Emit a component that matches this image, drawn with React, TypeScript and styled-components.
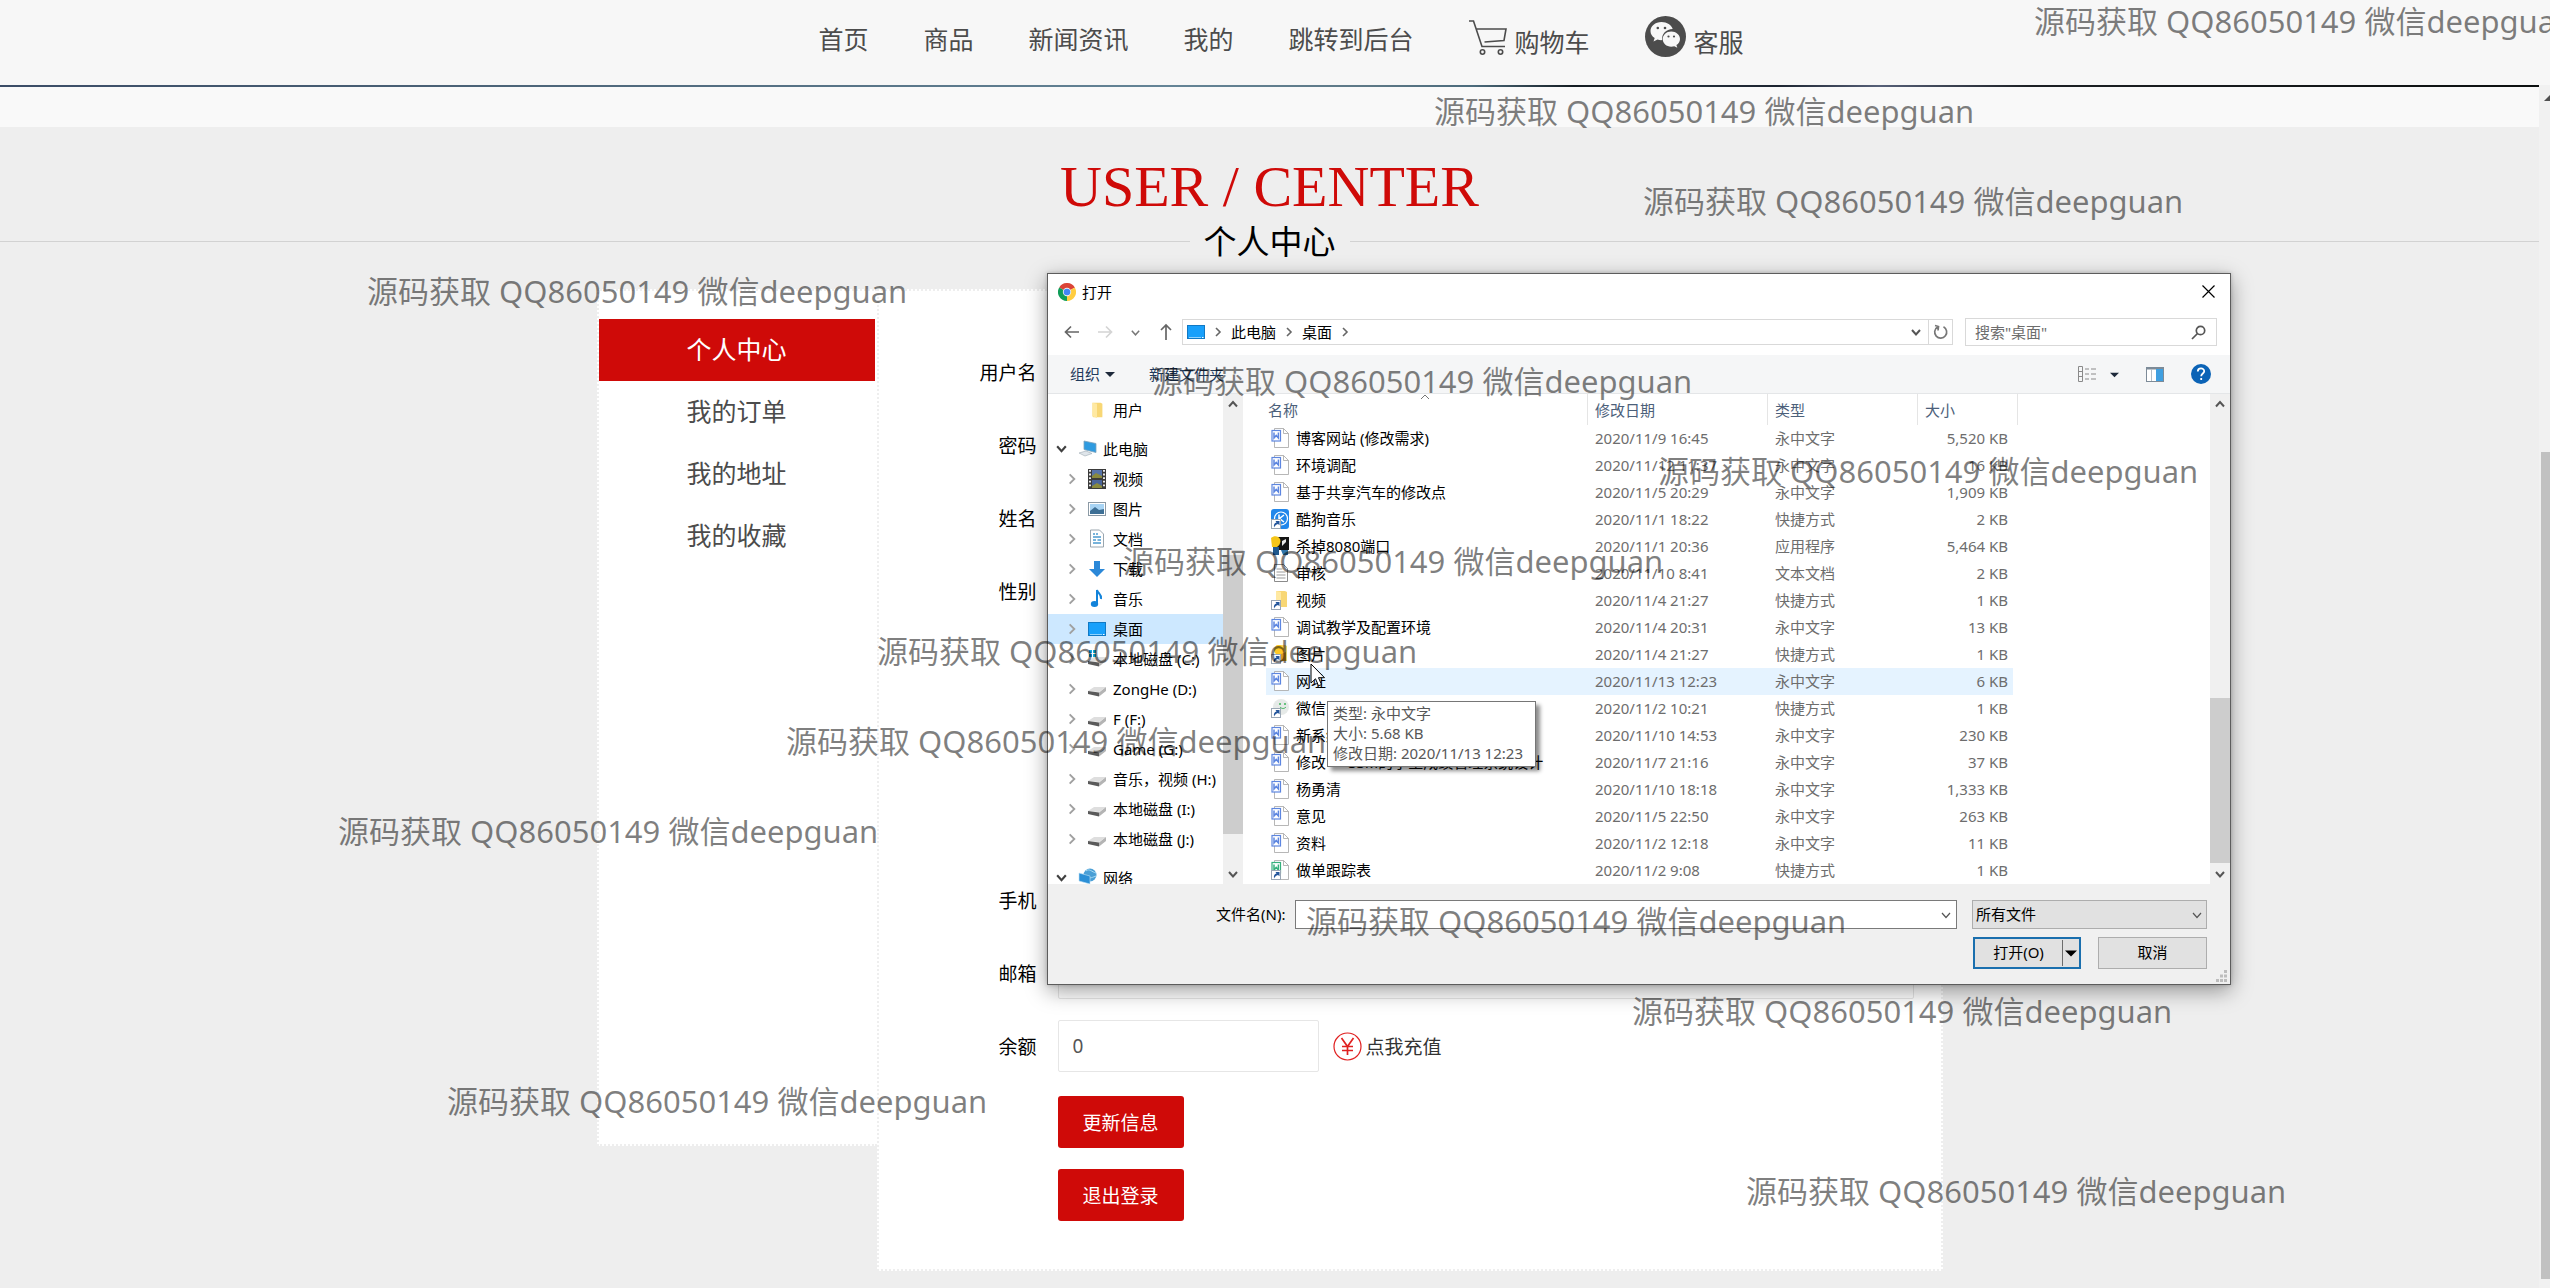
import React from 'react';
import styled, { createGlobalStyle } from 'styled-components';

const sans = `"Noto Sans", "Noto Sans CJK SC", sans-serif`;
const red = '#cf0a08';

const GlobalStyle = createGlobalStyle`
  *, *::before, *::after { box-sizing: border-box; }
  body { margin: 0; background: #eee; font-family: ${sans}; font-weight: 400; color: #000; }
  button, input, select { font: inherit; color: inherit; margin: 0; }
  button { cursor: pointer; }
  a { color: inherit; text-decoration: none; }
  ul { list-style: none; margin: 0; padding: 0; }
  h1, h2 { margin: 0; font-weight: inherit; }
  svg { display: block; flex: none; }
`;

/* ---------- page ---------- */

const Page = styled.div`
  position: relative;
  display: flex;
  flex-direction: column;
  min-height: 100vh;
  overflow: hidden;
`;

const Header = styled.header`
  display: flex;
  justify-content: center;
  height: 85px;
  padding: 14px 0 0 12px;
  background: #f7f7f7;
`;

const Nav = styled.nav`
  display: flex;
  align-items: flex-start;
  gap: 55px;
  font-size: 25px;
  line-height: 50px;
  color: #4c4c4c;
`;

const NavLink = styled.a`
  display: flex;
  gap: 8px;
  white-space: nowrap;
`;

const NavIconLink = styled(NavLink)`
  line-height: 56px;
`;

const Viewport = styled.div`
  flex: 1;
  display: flex;
`;

const Content = styled.main`
  flex: 1;
  min-width: 0;
`;

const BannerEdge = styled.div`
  height: 2px;
  background: linear-gradient(90deg, #3b4c66 0%, #4c6478 20%, #648496 46%, #5d7886 54%, #4b6b7c 58%, #141c22 62%, #24303c 66%, #1c2430 70%, #566078 74%, #1c2024 80%, #0c1010 100%);
`;

const Strip = styled.div`
  height: 40px;
  background: #f9f9f9;
`;

const Heading = styled.div`
  padding-top: 30px;
  text-align: center;
`;

const HeadingEn = styled.h1`
  font-family: "Liberation Serif", serif;
  font-weight: 400;
  font-size: 58px;
  line-height: 60px;
  color: ${red};
`;

const HeadingZh = styled.h2`
  display: flex;
  align-items: center;
  gap: 14px;
  font-size: 33px;
  line-height: 50px;
  &::before, &::after {
    content: "";
    flex: 1;
    height: 2px;
    border-top: 1px solid #d2d2d2;
  }
`;

const Panels = styled.div`
  display: flex;
  align-items: flex-start;
  width: 1346px;
  max-width: 100%;
  margin: 22px auto 16px;
`;

const Side = styled.aside`
  width: 280px;
  min-height: 857px;
  padding: 28px 2px 0 0;
  background: #fff;
  border: 2px dotted #eee;
  border-right: 0;
`;

const SideLink = styled.a<{ $active?: boolean }>`
  display: block;
  padding-bottom: 2px;
  font-size: 25px;
  line-height: 60px;
  text-align: center;
  color: ${p => (p.$active ? '#fff' : '#4c4c4c')};
  background: ${p => (p.$active ? red : 'transparent')};
`;

const Form = styled.form`
  flex: 1;
  display: flex;
  flex-direction: column;
  gap: 21px;
  padding: 55px 27px 48px 0;
  background: #fff;
  border: 2px dotted #eee;
  font-size: 19px;
`;

const Row = styled.div`
  display: grid;
  grid-template-columns: 158px 1fr;
  column-gap: 21px;
  align-items: center;
`;

const RowLabel = styled.label`
  text-align: right;
`;

const Field = styled.input`
  width: 100%;
  height: 52px;
  padding: 0 14px;
  border: 1px solid #e6e6e6;
  border-radius: 2px;
  background: #fff;
  color: #555;
  outline: 0;
`;

const Balance = styled.div`
  display: grid;
  grid-template-columns: 261px auto 1fr;
  column-gap: 14px;
  align-items: center;
`;

const TopUp = styled.a`
  display: flex;
  align-items: center;
  gap: 4px;
  color: #333;
`;

const AvatarBox = styled.div`
  height: 215px;
  width: 261px;
  border: 1px solid #e6e6e6;
`;

const Actions = styled.div`
  display: flex;
  flex-direction: column;
  align-items: flex-start;
  gap: 21px;
  padding: 3px 0 0 179px;
`;

const RedButton = styled.button`
  width: 126px;
  height: 52px;
  padding: 0;
  border: 0;
  border-radius: 3px;
  background: ${red};
  color: #fff;
`;

const PageScroll = styled.div`
  width: 11px;
  padding: 9px 0;
  display: flex;
  flex-direction: column;
  background: #f1f1f1;
  overflow: hidden;
`;

const PageSpacer = styled.div`
  flex: 350;
`;

const PageThumb = styled.div`
  flex: 826;
  margin-left: 2px;
  background: #c1c1c1;
`;

const ScrollArrow = styled.svg`
  margin-left: 5px;
`;

/* ---------- file dialog ---------- */

const Dialog = styled.section`
  position: absolute;
  left: 1047px;
  top: 273px;
  width: 1184px;
  display: flex;
  flex-direction: column;
  border: 1px solid #5c5c5c;
  background: #fff;
  box-shadow: 0 6px 20px rgba(0, 0, 0, 0.38), 0 0 4px rgba(0, 0, 0, 0.2);
  font-size: 15px;
  line-height: 20px;
`;

const TitleBar = styled.header`
  display: flex;
  align-items: center;
  gap: 6px;
  height: 37px;
  padding: 0 15px 2px 10px;
`;

const IconButton = styled.button`
  display: flex;
  align-items: center;
  justify-content: center;
  padding: 0;
  border: 0;
  background: none;
`;

const CloseButton = styled(IconButton)`
  margin-left: auto;
`;

const AddressRow = styled.div`
  display: flex;
  align-items: center;
  height: 44px;
  padding: 0 13px 2px 16px;
`;

const Arrows = styled.div`
  display: flex;
  align-items: center;
  justify-content: space-between;
  width: 110px;
  margin-right: 8px;
`;

const Crumbs = styled.div`
  flex: 1;
  display: flex;
  align-items: center;
  gap: 7px;
  height: 26px;
  padding-left: 4px;
  border: 1px solid #d9d9d9;
`;

const CrumbTools = styled.div`
  display: flex;
  align-self: stretch;
  margin-left: auto;
`;

const CrumbTool = styled(IconButton)<{ $divided?: boolean }>`
  width: 24px;
  border-left: ${p => (p.$divided ? '1px solid #d9d9d9' : '0')};
`;

const SearchBox = styled.label`
  display: flex;
  align-items: center;
  width: 252px;
  height: 28px;
  margin-left: 12px;
  padding: 0 10px 0 9px;
  border: 1px solid #d9d9d9;
`;

const SearchInput = styled.input`
  flex: 1;
  min-width: 0;
  padding: 0;
  border: 0;
  outline: 0;
  background: none;
  &::placeholder { color: #6d6d6d; opacity: 1; }
`;

const Toolbar = styled.div`
  display: flex;
  align-items: center;
  height: 39px;
  padding: 0 19px 0 22px;
  background: #f5f6f7;
  border-bottom: 1px solid #e4e6e8;
  color: #1e395b;
`;

const ToolText = styled.button`
  display: flex;
  align-items: center;
  gap: 5px;
  margin-right: 34px;
  padding: 0;
  border: 0;
  background: none;
`;

const ToolIcons = styled.div`
  display: flex;
  align-items: center;
  gap: 27px;
  margin-left: auto;
`;

const ViewPicker = styled(IconButton)`
  gap: 14px;
`;

const Body = styled.div`
  display: flex;
  height: 490px;
`;

const Tree = styled.ul`
  width: 175px;
  padding-top: 1px;
  overflow: hidden;
`;

const TreeItem = styled.li<{ $level: number; $gap?: boolean; $active?: boolean }>`
  display: grid;
  grid-template-columns: 12px 20px 1fr;
  column-gap: ${p => (p.$level ? '11px' : '11px')};
  align-items: center;
  height: 30px;
  margin-top: ${p => (p.$gap ? '9px' : '0')};
  padding-left: ${p => (p.$level ? '17px' : '7px')};
  padding-bottom: 1px;
  white-space: nowrap;
  background: ${p => (p.$active ? '#cde8ff' : 'transparent')};
`;

const TreeText = styled.span`
  margin-left: -6px;
`;

const Scroll = styled.div`
  display: grid;
  width: 20px;
  background: #f0f0f0;
  justify-items: center;
`;

const TreeScroll = styled(Scroll)`
  grid-template-rows: 20px 141fr 279fr 30fr 20px;
  align-items: center;
  margin-right: 2px;
`;

const FileScroll = styled(Scroll)`
  grid-template-rows: 20px 284fr 165fr 1fr 20px;
  align-items: center;
  margin-left: auto;
`;

const Thumb = styled.div`
  grid-row: 3;
  align-self: stretch;
  justify-self: stretch;
  background: #cdcdcd;
`;

const ScrollEnd = styled(IconButton)`
  grid-row: 5;
`;

const Files = styled.table`
  width: 752px;
  margin-left: 21px;
  align-self: flex-start;
  table-layout: fixed;
  border-collapse: separate;
  border-spacing: 0;
  color: #6d6d6d;
`;

const HeadCell = styled.th`
  height: 31px;
  padding: 0 0 0 7px;
  border-right: 1px solid #e5e5e5;
  font-weight: inherit;
  text-align: left;
  color: #4c607a;
  &:first-child { padding-left: 2px; }
`;

const FileRow = styled.tr<{ $hover?: boolean }>`
  td { background-color: ${p => (p.$hover ? '#e5f3ff' : 'transparent')}; }
`;

const Cell = styled.td`
  height: 27px;
  padding: 0 0 2px 7px;
  white-space: nowrap;
  background-clip: padding-box;
  &:last-child {
    padding: 0 5px 2px 0;
    border-right: 5px solid transparent;
    text-align: right;
  }
`;

const NameCell = styled(Cell)`
  padding-left: 5px;
  color: #000;
`;

const FileName = styled.span`
  display: flex;
  align-items: center;
  gap: 7px;
`;

const Footer = styled.footer`
  position: relative;
  display: flex;
  flex-direction: column;
  gap: 8px;
  padding: 16px 23px 15px 168px;
  background: #f0f0f0;
`;

const FooterLine = styled.div`
  display: flex;
  align-items: center;
  gap: 15px;
`;

const FileLabel = styled.label`
  margin-right: -5px;
  padding-bottom: 2px;
`;

const Combo = styled.div`
  flex: 1;
  display: flex;
  align-items: center;
  height: 29px;
  padding: 0 4px;
  border: 1px solid #7a7a7a;
  background: #fff;
`;

const ComboInput = styled.input`
  flex: 1;
  min-width: 0;
  border: 0;
  outline: 0;
  background: none;
`;

const TypePicker = styled.div`
  display: grid;
  align-items: center;
  width: 235px;
  > * { grid-area: 1 / 1; }
  > svg { justify-self: end; margin-right: 4px; pointer-events: none; }
`;

const TypeSelect = styled.select`
  appearance: none;
  width: 100%;
  height: 29px;
  padding: 0 3px 2px;
  border: 1px solid #adadad;
  border-radius: 0;
  background: #e1e1e1;
`;

const Buttons = styled(FooterLine)`
  justify-content: flex-end;
  gap: 17px;
`;

const OpenSplit = styled.div`
  display: flex;
  width: 108px;
  height: 32px;
  padding: 1px 0;
  border: 2px solid #1a6fae;
  background: #e1e1e1;
`;

const OpenButton = styled.button`
  flex: 1;
  padding: 0 0 2px;
  border: 0;
  background: none;
`;

const OpenMore = styled(IconButton)`
  width: 17px;
  border-left: 1px solid #6d6d6d;
`;

const CancelButton = styled.button`
  width: 109px;
  height: 32px;
  padding: 0 0 2px;
  border: 1px solid #adadad;
  background: #e1e1e1;
`;

const Grip = styled.svg`
  position: absolute;
  right: 3px;
  bottom: 2px;
`;

const SortMark = styled.svg`
  position: absolute;
  left: 1420px;
  top: 394px;
`;

const Tooltip = styled.div`
  position: absolute;
  left: 1327px;
  top: 701px;
  width: 209px;
  padding: 1px 5px 3px;
  border: 1px solid #767676;
  background: #fff;
  box-shadow: 4px 4px 4px rgba(0, 0, 0, 0.45);
  font-size: 15px;
  line-height: 20px;
  color: #575757;
  white-space: nowrap;
`;

const Pointer = styled.svg`
  position: absolute;
  left: 1310px;
  top: 663px;
`;

const Marks = styled.div`
  position: absolute;
  inset: 0;
  overflow: hidden;
  pointer-events: none;
`;

const Mark = styled.span<{ $x: number; $y: number }>`
  position: absolute;
  left: ${p => p.$x}px;
  top: ${p => p.$y}px;
  font-size: 31px;
  line-height: 40px;
  white-space: nowrap;
  color: rgba(0, 0, 0, 0.5);
`;

/* ---------- drawings ---------- */

const Cart = () => (
  <svg width="38" height="56" viewBox="0 0 38 56" fill="none" stroke="#4c4c4c" strokeWidth="1.6">
    <path d="M0 7h4.500l8.500 25.500h23M6.500 15h30.500l-2 11.500-19.500 1.500" />
    <circle cx="13.500" cy="38" r="2.200" /><circle cx="31.500" cy="38" r="2.200" />
  </svg>
);

const Wechat = () => (
  <svg width="41" height="56" viewBox="0 0 41 56">
    <circle cx="20.500" cy="22.500" r="20.500" fill="#4c4c4c" />
    <path fill="#f7f7f7" d="M16.500 8c-6.300 0-11 4-11 9 0 3 1.600 5.400 4.200 7.100L8.500 27.500l4-2c1.600.5 3 .7 4.700.6-.8-6 4-11 10.500-11C26.500 11 22 8 16.500 8z" />
    <path fill="#f7f7f7" d="M35 25c0-4.300-4-7.600-8.700-7.600-5 0-8.600 3.500-8.600 7.600 0 4.300 3.700 7.700 8.600 7.700 1 0 2-.2 3-.5l3 1.600-.9-2.700C33.600 29.600 35 27.600 35 25z" />
    <g fill="#4c4c4c"><circle cx="12.800" cy="14" r="1.300" /><circle cx="20" cy="14" r="1.300" /><circle cx="23.500" cy="22.500" r="1.100" /><circle cx="29" cy="22.500" r="1.100" /></g>
  </svg>
);

const Yuan = () => (
  <svg width="29" height="29" viewBox="0 0 29 29" fill="none" stroke="#e02020">
    <circle cx="14.500" cy="14.500" r="13.500" strokeWidth="1.200" />
    <path d="M8.500 6l6 8.500 6-8.500M14.500 14.500V23M9 14.500h11M9 18.500h11" strokeWidth="1.700" />
  </svg>
);

const Chrome = () => (
  <svg width="18" height="18" viewBox="0 0 18 18">
    <path fill="#db4437" d="M9 9L1.200 4.500A9 9 0 0 1 16.800 4.500z" />
    <path fill="#0f9d58" d="M9 9L9 18A9 9 0 0 1 1.200 4.500z" />
    <path fill="#ffcd40" d="M9 9L16.800 4.500A9 9 0 0 1 9 18z" />
    <path fill="#db4437" d="M9 5h7.100l.7-.5L9 4z" />
    <circle cx="9" cy="9" r="4.200" fill="#f1f1f1" /><circle cx="9" cy="9" r="3.300" fill="#4285f4" />
  </svg>
);

const Chevron = ({ dir, color = '#555', size = 12, weight = 1.6 }: { dir: 'up' | 'down' | 'right'; color?: string; size?: number; weight?: number }) => {
  const d = { up: 'M2 8.500l4-4.500 4 4.500', down: 'M2 4l4 4.500 4-4.500', right: 'M4 2l4 4-4 4' }[dir];
  return <svg width={size} height={size} viewBox="0 0 12 12" fill="none" stroke={color} strokeWidth={weight}><path d={d} /></svg>;
};

const Arrow = ({ d, color }: { d: string; color: string }) => (
  <svg width="16" height="18" viewBox="0 0 16 18" fill="none" stroke={color} strokeWidth="1.700"><path d={d} /></svg>
);

const Caret = ({ size = 10, color = '#1e2a3b' }: { size?: number; color?: string }) => (
  <svg width={size} height={size} viewBox="0 0 10 10"><path d="M0 3h10L5 8z" fill={color} /></svg>
);

const Monitor = () => (
  <svg width="18" height="18" viewBox="0 0 18 18">
    <rect x=".5" y="2.500" width="17" height="13" fill="#18a0fb" stroke="#1179c4" />
    <path d="M2 14.500h12" stroke="#8fd3ff" /><path d="M15 14.500h1.500" stroke="#fff" />
  </svg>
);

const Computer = () => (
  <svg width="19" height="18" viewBox="0 0 19 18">
    <path d="M6 1l12 2.500v9L6 9.500z" fill="#2f9be0" stroke="#7fa3bb" strokeWidth=".8" />
    <path d="M1 13l7-2 6 2.500L7 16z" fill="#dfe5ea" stroke="#a9b4bc" strokeWidth=".7" />
  </svg>
);

const FolderShape = () => (
  <g><path d="M5 1h9l2 1v15H6l-1-1z" fill="#f8d775" /><path d="M5 1l5 1v16l-5-2z" fill="#ffe9a2" /></g>
);

const Folder = () => <svg width="18" height="18" viewBox="0 0 20 18"><FolderShape /></svg>;

const Video = () => (
  <svg width="18" height="20" viewBox="0 0 18 20">
    <rect width="18" height="20" fill="#3a3a3a" /><rect x="4" y="1" width="10" height="8" fill="#5874a8" /><rect x="4" y="11" width="10" height="8" fill="#4a6498" />
    <path d="M4 7l4-3 6 3v2H4zM4 17l5-3 5 3v2H4z" fill="#8a8a3c" />
    <path d="M2 1v18M16 1v18" stroke="#fff" strokeWidth="1.800" strokeDasharray="1.800 1.800" />
  </svg>
);

const Picture = () => (
  <svg width="18" height="16" viewBox="0 0 18 16">
    <rect x=".5" y="1.500" width="17" height="13" fill="#fff" stroke="#8c9aa5" />
    <rect x="2" y="3" width="14" height="10" fill="#a8d4f4" /><path d="M2 10l5-4 4 3 5-1v5H2z" fill="#3d6f95" />
  </svg>
);

const Document = () => (
  <svg width="18" height="19" viewBox="0 0 18 19">
    <path d="M2.500 1h9l4 4v13h-13z" fill="#fff" stroke="#8f9ca6" strokeWidth=".9" />
    <path d="M5 5h2M8 5h2M5 8h8M5 11h3M9.500 11h3.500M5 14h8" stroke="#4b9bd0" strokeWidth="1.400" />
  </svg>
);

const Download = () => (
  <svg width="18" height="18" viewBox="0 0 18 18"><path d="M6 1h6v8h5l-8 8-8-8h5z" fill="#2b88d8" /></svg>
);

const Music = () => (
  <svg width="18" height="19" viewBox="0 0 18 19">
    <ellipse cx="6.500" cy="15" rx="3.700" ry="2.900" fill="#1283da" />
    <path d="M9 15V1c1 4 5 4 4 9" fill="none" stroke="#1283da" strokeWidth="2" />
  </svg>
);

const Drive = ({ system }: { system?: boolean }) => (
  <svg width="19" height="18" viewBox="0 0 19 18">
    <path d="M0 11l6-4h12l-7 5z" fill="#dedede" /><path d="M0 11l11 1.500v4L0 14z" fill="#5a5a5a" /><path d="M11 12.500l7-5.500v4l-7 5.500z" fill="#b4b4b4" />
    {system && <path d="M1 0h3v3H1zM5 0h3v3H5zM1 4h3v3H1zM5 4h3v3H5z" fill="#11a7e0" />}
  </svg>
);

const Network = () => (
  <svg width="19" height="19" viewBox="0 0 19 19">
    <circle cx="12" cy="7" r="6.500" fill="#4a9fd6" /><path d="M8 3c3-3 6 1 10 2M9 9c3 2 6 0 9-1" stroke="#a9dcf5" fill="none" />
    <path d="M1 5l11 3v8L1 13z" fill="#2b8fd6" stroke="#bfe2f7" strokeWidth=".6" />
  </svg>
);

const Shortcut = () => (
  <g><rect x=".5" y="10.500" width="9" height="9" fill="#fff" stroke="#9aa7b5" /><path d="M3 18.500c-.5-3 .5-4.500 2.500-5L4.500 12H8.500v4.200L7 15C5 15.500 4 16.500 3 18.500z" fill="#24569c" /></g>
);

const Sheet = ({ color, children }: { color: string; children?: React.ReactNode }) => (
  <svg width="18" height="20" viewBox="0 0 18 20">
    <path d="M3.500.5h9l5 5v14h-14z" fill="#fff" stroke="#a4a4a4" strokeWidth=".8" /><path d="M12.500.5v5h5" fill="none" stroke="#a4a4a4" strokeWidth=".8" />
    <rect x="1" y="2.500" width="8.500" height="10.500" fill="#fff" stroke={color} strokeWidth="1.200" />
    <path d="M3 4.500v5.500l2.200-2.500 2.200 2.500V4.500" fill="none" stroke={color} strokeWidth="1.500" />
    {children}
  </svg>
);

const icons: Record<string, React.ReactNode> = {
  doc: <Sheet color="#5d86e0" />,
  sheet: <Sheet color="#35b07c"><Shortcut /></Sheet>,
  kugou: (
    <svg width="18" height="20" viewBox="0 0 18 20">
      <rect width="18" height="20" rx="3" fill="#2287ea" /><circle cx="10" cy="9.500" r="6.500" fill="none" stroke="#fff" strokeWidth="1.200" />
      <path d="M8 5.500v8M13 6l-4.500 3.500L13 13" stroke="#fff" strokeWidth="1.500" fill="none" /><Shortcut />
    </svg>
  ),
  app: (
    <svg width="18" height="20" viewBox="0 0 18 20">
      <rect x="5" y="1" width="13" height="13" fill="#141414" /><path d="M0 2c3-3 8-2 9 1s0 6-3 8H1z" fill="#f5c518" />
      <path d="M2 11h6v8H2z" fill="#20588c" /><path d="M10 14h7v5h-5z" fill="#2f74ab" /><path d="M11 5l4-2v3l-4 4z" fill="#e9e9e9" />
    </svg>
  ),
  text: (
    <svg width="18" height="20" viewBox="0 0 18 20">
      <path d="M3.500 1.500h9l4 4v13h-13z" fill="#fff" stroke="#8b8b8b" /><path d="M5.500 6h6M5.500 9h9M5.500 12h9M5.500 15h9" stroke="#9a9a9a" />
    </svg>
  ),
  folder: <svg width="18" height="20" viewBox="0 0 18 20"><FolderShape /><Shortcut /></svg>,
  photos: (
    <svg width="18" height="20" viewBox="0 0 18 20"><FolderShape /><circle cx="8" cy="6" r="5" fill="#ffc928" /><path d="M10 10l5-2v9h-5z" fill="#d79a22" /><Shortcut /></svg>
  ),
  wechat: (
    <svg width="18" height="20" viewBox="0 0 18 20">
      <circle cx="10" cy="9" r="8" fill="#e6eae8" /><circle cx="9" cy="6" r="1" fill="#3fb45c" /><circle cx="14" cy="6" r="1" fill="#3fb45c" /><path d="M9 9c2 2 4 2 6 0" stroke="#3fb45c" fill="none" /><Shortcut />
    </svg>
  ),
};

/* ---------- data ---------- */

type TreeNode = { text: string; icon: React.ReactNode; level: number; open?: boolean; leaf?: boolean; gap?: boolean; active?: boolean };

const tree: TreeNode[] = [
  { text: '用户', icon: <Folder />, level: 1, leaf: true },
  { text: '此电脑', icon: <Computer />, level: 0, open: true, gap: true },
  { text: '视频', icon: <Video />, level: 1 },
  { text: '图片', icon: <Picture />, level: 1 },
  { text: '文档', icon: <Document />, level: 1 },
  { text: '下载', icon: <Download />, level: 1 },
  { text: '音乐', icon: <Music />, level: 1 },
  { text: '桌面', icon: <Monitor />, level: 1, active: true },
  { text: '本地磁盘 (C:)', icon: <Drive system />, level: 1 },
  { text: 'ZongHe (D:)', icon: <Drive />, level: 1 },
  { text: 'F (F:)', icon: <Drive />, level: 1 },
  { text: 'Game (G:)', icon: <Drive />, level: 1 },
  { text: '音乐，视频 (H:)', icon: <Drive />, level: 1 },
  { text: '本地磁盘 (I:)', icon: <Drive />, level: 1 },
  { text: '本地磁盘 (J:)', icon: <Drive />, level: 1 },
  { text: '网络', icon: <Network />, level: 0, open: true, gap: true },
];

const W = '永中文字';
const S = '快捷方式';
const files: [string, string, string, string, string][] = [
  ['doc', '博客网站 (修改需求)', '2020/11/9 16:45', W, '5,520 KB'],
  ['doc', '环境调配', '2020/11/12 11:37', W, '16 KB'],
  ['doc', '基于共享汽车的修改点', '2020/11/5 20:29', W, '1,909 KB'],
  ['kugou', '酷狗音乐', '2020/11/1 18:22', S, '2 KB'],
  ['app', '杀掉8080端口', '2020/11/1 20:36', '应用程序', '5,464 KB'],
  ['text', '审核', '2020/11/10 8:41', '文本文档', '2 KB'],
  ['folder', '视频', '2020/11/4 21:27', S, '1 KB'],
  ['doc', '调试教学及配置环境', '2020/11/4 20:31', W, '13 KB'],
  ['photos', '图片', '2020/11/4 21:27', S, '1 KB'],
  ['doc', '网址', '2020/11/13 12:23', W, '6 KB'],
  ['wechat', '微信', '2020/11/2 10:21', S, '1 KB'],
  ['doc', '新系统', '2020/11/10 14:53', W, '230 KB'],
  ['doc', '修改 --- SSM的学生成绩管理系统设计', '2020/11/7 21:16', W, '37 KB'],
  ['doc', '杨勇清', '2020/11/10 18:18', W, '1,333 KB'],
  ['doc', '意见', '2020/11/5 22:50', W, '263 KB'],
  ['doc', '资料', '2020/11/2 12:18', W, '11 KB'],
  ['sheet', '做单跟踪表', '2020/11/2 9:08', S, '1 KB'],
];
const hovered = 9;

const marks: [number, number][] = [
  [2034, 1], [1434, 91], [1643, 181], [367, 271], [1152, 361], [1658, 451], [1123, 541],
  [877, 631], [786, 721], [338, 811], [1306, 901], [1632, 991], [447, 1081], [1746, 1171],
];

const sideLinks = ['个人中心', '我的订单', '我的地址', '我的收藏'];

/* ---------- sections ---------- */

const TextRow = ({ id, label, type = 'text' }: { id: string; label: string; type?: string }) => (
  <Row>
    <RowLabel htmlFor={id}>{label}</RowLabel>
    <Field id={id} type={type} />
  </Row>
);

const OpenDialog = () => (
  <Dialog role="dialog" aria-label="打开">
    <TitleBar>
      <Chrome />
      打开
      <CloseButton aria-label="关闭">
        <svg width="13" height="13" viewBox="0 0 13 13" stroke="#000" strokeWidth="1.200"><path d="M.5.5l12 12M12.500.5l-12 12" /></svg>
      </CloseButton>
    </TitleBar>

    <AddressRow>
      <Arrows>
        <Arrow color="#666" d="M15 9H1.500M7 3.500L1.500 9 7 14.500" />
        <Arrow color="#d4d4d4" d="M1 9h13.500M9 3.500L14.500 9 9 14.500" />
        <Chevron dir="down" color="#777" size={11} />
        <Arrow color="#666" d="M8 17V2M3 7l5-5 5 5" />
      </Arrows>
      <Crumbs>
        <Monitor />
        <Chevron dir="right" color="#666" />
        <span>此电脑</span>
        <Chevron dir="right" color="#666" />
        <span>桌面</span>
        <Chevron dir="right" color="#666" />
        <CrumbTools>
          <CrumbTool aria-label="历史"><Chevron dir="down" weight={2} /></CrumbTool>
          <CrumbTool aria-label="刷新" $divided>
            <svg width="16" height="16" viewBox="0 0 16 16" fill="none" stroke="#777" strokeWidth="1.700"><path d="M10.500 2.800A6 6 0 1 1 4.500 3M2 1.500l3.500 1-.5 4" /></svg>
          </CrumbTool>
        </CrumbTools>
      </Crumbs>
      <SearchBox>
        <SearchInput type="text" placeholder={'搜索"桌面"'} aria-label="搜索" />
        <svg width="15" height="15" viewBox="0 0 15 15" fill="none" stroke="#555" strokeWidth="1.700"><circle cx="9.500" cy="5.500" r="4.200" /><path d="M6.500 8.500L1 14" /></svg>
      </SearchBox>
    </AddressRow>

    <Toolbar>
      <ToolText>组织<Caret /></ToolText>
      <ToolText>新建文件夹</ToolText>
      <ToolIcons>
        <ViewPicker aria-label="视图">
          <svg width="18" height="16" viewBox="0 0 18 16" fill="none" stroke="#8a8a8a"><path d="M.5.5h4v15h-4zM.5 5.500h4M.5 10.500h4M7 3h4M13 3h5M7 8h4M13 8h5M7 13h4M13 13h5" /></svg>
          <Caret size={9} />
        </ViewPicker>
        <IconButton aria-label="预览窗格">
          <svg width="18" height="15" viewBox="0 0 18 15"><rect x=".5" y=".5" width="17" height="14" fill="#fff" stroke="#7d8b98" /><path d="M0 1.500h18" stroke="#7d8b98" strokeWidth="2" /><rect x="10" y="2" width="7" height="12" fill="#3f9fe0" /><path d="M5.500 2v12" stroke="#b5bec6" /></svg>
        </IconButton>
        <IconButton aria-label="帮助">
          <svg width="20" height="20" viewBox="0 0 20 20"><circle cx="10" cy="10" r="10" fill="#0b63b6" /><path d="M6.800 7.500c0-4 6.400-4 6.400-.3 0 2.300-3 2.400-3 5M10.200 14v2" stroke="#fff" strokeWidth="1.800" fill="none" /></svg>
        </IconButton>
      </ToolIcons>
    </Toolbar>

    <Body>
      <Tree>
        {tree.map(n => (
          <TreeItem key={n.text} $level={n.level} $gap={n.gap} $active={n.active}>
            {n.leaf ? <span /> : <Chevron dir={n.open ? 'down' : 'right'} color={n.open ? '#404040' : '#a0a0a0'} weight={n.open ? 2 : 1.6} size={n.open ? 13 : 14} />}
            {n.icon}
            <TreeText>{n.text}</TreeText>
          </TreeItem>
        ))}
      </Tree>
      <TreeScroll>
        <IconButton aria-label="向上"><Chevron dir="up" weight={2} /></IconButton>
        <Thumb />
        <ScrollEnd aria-label="向下"><Chevron dir="down" weight={2} /></ScrollEnd>
      </TreeScroll>
      <Files>
        <colgroup>
          <col width="322" /><col width="180" /><col width="150" /><col width="100" />
        </colgroup>
        <thead>
          <tr>
            <HeadCell>名称</HeadCell>
            <HeadCell>修改日期</HeadCell>
            <HeadCell>类型</HeadCell>
            <HeadCell>大小</HeadCell>
          </tr>
        </thead>
        <tbody>
          {files.map(([icon, name, date, type, size], i) => (
            <FileRow key={name} $hover={i === hovered}>
              <NameCell><FileName>{icons[icon]}{name}</FileName></NameCell>
              <Cell>{date}</Cell>
              <Cell>{type}</Cell>
              <Cell>{size}</Cell>
            </FileRow>
          ))}
        </tbody>
      </Files>
      <FileScroll>
        <IconButton aria-label="向上"><Chevron dir="up" weight={2} /></IconButton>
        <Thumb />
        <ScrollEnd aria-label="向下"><Chevron dir="down" weight={2} /></ScrollEnd>
      </FileScroll>
    </Body>

    <Footer>
      <FooterLine>
        <FileLabel htmlFor="filename">文件名(N):</FileLabel>
        <Combo>
          <ComboInput id="filename" type="text" />
          <Chevron dir="down" weight={1.2} />
        </Combo>
        <TypePicker>
          <TypeSelect aria-label="文件类型"><option>所有文件</option></TypeSelect>
          <Chevron dir="down" weight={1.2} />
        </TypePicker>
      </FooterLine>
      <Buttons>
        <OpenSplit>
          <OpenButton>打开(O)</OpenButton>
          <OpenMore aria-label="更多"><Caret size={12} color="#000" /></OpenMore>
        </OpenSplit>
        <CancelButton>取消</CancelButton>
      </Buttons>
      <Grip width="12" height="12" viewBox="0 0 12 12" fill="#bdbdbd">
        <path d="M9 0h3v3H9zM5 4.500h3v3H5zM9 4.500h3v3H9zM1 9h3v3H1zM5 9h3v3H5zM9 9h3v3H9z" />
      </Grip>
    </Footer>
  </Dialog>
);

export default function App() {
  return (
    <Page>
      <GlobalStyle />
      <Header>
        <Nav>
          {['首页', '商品', '新闻资讯', '我的', '跳转到后台'].map(t => <NavLink href="#" key={t}>{t}</NavLink>)}
          <NavIconLink href="#"><Cart />购物车</NavIconLink>
          <NavIconLink href="#"><Wechat />客服</NavIconLink>
        </Nav>
      </Header>

      <Viewport>
        <Content>
          <BannerEdge />
          <Strip />
          <Heading>
            <HeadingEn>USER / CENTER</HeadingEn>
            <HeadingZh>个人中心</HeadingZh>
          </Heading>
          <Panels>
            <Side>
              {sideLinks.map((t, i) => <SideLink href="#" key={t} $active={i === 0}>{t}</SideLink>)}
            </Side>
            <Form onSubmit={e => e.preventDefault()}>
              <TextRow id="username" label="用户名" />
              <TextRow id="password" label="密码" type="password" />
              <TextRow id="realname" label="姓名" />
              <TextRow id="gender" label="性别" />
              <Row><span /><AvatarBox /></Row>
              <TextRow id="phone" label="手机" />
              <TextRow id="email" label="邮箱" />
              <Row>
                <RowLabel htmlFor="balance">余额</RowLabel>
                <Balance>
                  <Field id="balance" type="text" defaultValue="0" />
                  <TopUp href="#"><Yuan />点我充值</TopUp>
                </Balance>
              </Row>
              <Actions>
                <RedButton type="submit">更新信息</RedButton>
                <RedButton type="button">退出登录</RedButton>
              </Actions>
            </Form>
          </Panels>
        </Content>
        <PageScroll>
          <ScrollArrow width="12" height="8" viewBox="0 0 12 8"><path d="M0 7l6-6 6 6z" fill="#505050" /></ScrollArrow>
          <PageSpacer />
          <PageThumb />
        </PageScroll>
      </Viewport>

      <OpenDialog />
      <SortMark width="10" height="6" viewBox="0 0 10 6" fill="none" stroke="#777"><path d="M1 5l4-4 4 4" /></SortMark>
      <Tooltip role="tooltip">
        <div>类型: 永中文字</div>
        <div>大小: 5.68 KB</div>
        <div>修改日期: 2020/11/13 12:23</div>
      </Tooltip>
      <Pointer width="16" height="25" viewBox="0 0 16 25"><path d="M1 1v19l4.500-4.200 3 7 3-1.300-3-6.800h6z" fill="#fff" stroke="#000" /></Pointer>
      <Marks aria-hidden="true">
        {marks.map(([x, y]) => <Mark key={y} $x={x} $y={y}>源码获取 QQ86050149 微信deepguan</Mark>)}
      </Marks>
    </Page>
  );
}
